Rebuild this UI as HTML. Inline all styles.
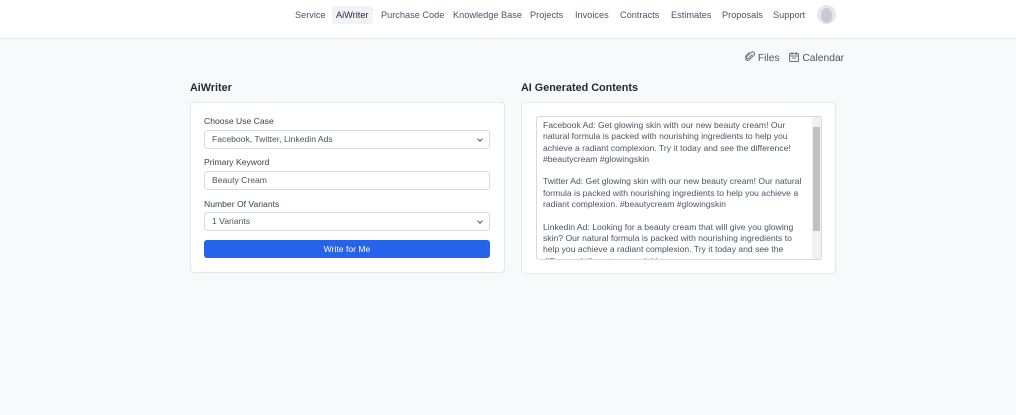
<!DOCTYPE html>
<html><head><meta charset="utf-8"><style>
*{box-sizing:border-box;margin:0;padding:0}
body{width:1016px;height:415px;background:#f8f9fb;font-family:"Liberation Sans",Arial,sans-serif;position:relative;overflow:hidden;color:#374151}
.hdr{position:absolute;left:0;top:0;width:1016px;height:39px;background:#fff;border-bottom:1px solid #e8eaee}
.nav{position:absolute;top:6px;font-size:9.2px;color:#4b5563;height:18px;line-height:18px}
.act{background:#f1f3f6;border-radius:3px;color:#1f2937;padding:0 4px}
.av{position:absolute;left:817px;top:5px;width:19px;height:19px;border-radius:50%;background:#e5e7eb;overflow:hidden}
.av:before{content:"";position:absolute;left:4px;top:3px;width:11px;height:15px;border-radius:50%;background:#c5cad3}
.h{position:absolute;font-size:10.8px;font-weight:bold;color:#1f2937}
.card{position:absolute;background:#fff;border:1px solid #e5e7eb;border-radius:4px}
.lbl{position:absolute;left:204px;font-size:8.6px;color:#374151}
.inp{position:absolute;left:204px;width:286px;height:19px;border:1px solid #d6d9de;border-radius:3px;font-size:8.6px;color:#4b5563;line-height:17px;padding-left:7px;background:#fff}
.chev{position:absolute;right:7px;top:6px;width:4px;height:4px;border-right:1px solid #555;border-bottom:1px solid #555;transform:rotate(45deg)}
.btn{position:absolute;left:204px;top:240px;width:286px;height:18px;background:#2563eb;border-radius:3px;color:#fff;font-size:8.6px;text-align:center;line-height:18px}
.ta{position:absolute;left:536px;top:116px;width:286px;height:144px;border:1px solid #d6d9de;border-radius:3px;overflow:hidden;background:#fff}
.txt{position:absolute;left:6px;top:3px;width:266px;font-size:8.6px;line-height:11.3px;color:#4b5563}
.sb{position:absolute;right:0;top:0;width:9px;height:142px;background:#f1f1f1}
.thumb{position:absolute;right:1px;top:10px;width:7px;height:104px;background:#c1c1c1}
</style></head><body>
<div class="hdr">
<span class="nav" style="left:295px">Service</span>
<span class="nav act" style="left:332px">AiWriter</span>
<span class="nav" style="left:381px">Purchase Code</span>
<span class="nav" style="left:453px">Knowledge Base</span>
<span class="nav" style="left:530px">Projects</span>
<span class="nav" style="left:575px">Invoices</span>
<span class="nav" style="left:620px">Contracts</span>
<span class="nav" style="left:671px">Estimates</span>
<span class="nav" style="left:722px">Proposals</span>
<span class="nav" style="left:773px">Support</span>
<div class="av"></div>
</div>
<div style="position:absolute;left:745px;top:51px;font-size:10.3px;color:#4b5563">
<svg width="10" height="11" viewBox="0 0 10 11" style="vertical-align:-1px"><path d="M7.5 3.5L3.5 7.5a1.2 1.2 0 0 1-1.7-1.7L6.3 1.3a2 2 0 0 1 2.8 2.8L4.5 8.7a2.6 2.6 0 0 1-3.7-3.7L4.5 1.3" fill="none" stroke="#6b7280" stroke-width="1"/></svg> Files
<span style="margin-left:7px"><svg width="10" height="10" viewBox="0 0 10 10" style="vertical-align:-1px"><rect x="0.5" y="1.5" width="9" height="8" rx="1" fill="none" stroke="#6b7280"/><path d="M0.5 4h9M3 0v3M7 0v3M3 6h4" stroke="#6b7280"/></svg> Calendar</span>
</div>
<div class="h" style="left:190px;top:82px">AiWriter</div>
<div class="h" style="left:521px;top:82px">AI Generated Contents</div>
<div class="card" style="left:190px;top:102px;width:315px;height:171px"></div>
<div class="card" style="left:521px;top:102px;width:315px;height:172px"></div>
<div class="lbl" style="top:116px">Choose Use Case</div>
<div class="inp" style="top:130px">Facebook, Twitter, Linkedin Ads<span class="chev"></span></div>
<div class="lbl" style="top:157px">Primary Keyword</div>
<div class="inp" style="top:171px">Beauty Cream</div>
<div class="lbl" style="top:199px">Number Of Variants</div>
<div class="inp" style="top:212px">1 Variants<span class="chev"></span></div>
<div class="btn">Write for Me</div>
<div class="ta"><div class="txt">Facebook Ad: Get glowing skin with our new beauty cream! Our natural formula is packed with nourishing ingredients to help you achieve a radiant complexion. Try it today and see the difference! #beautycream #glowingskin<br><br>Twitter Ad: Get glowing skin with our new beauty cream! Our natural formula is packed with nourishing ingredients to help you achieve a radiant complexion. #beautycream #glowingskin<br><br>Linkedin Ad: Looking for a beauty cream that will give you glowing skin? Our natural formula is packed with nourishing ingredients to help you achieve a radiant complexion. Try it today and see the difference! #beautycream #skincare</div><div class="sb"><div class="thumb"></div></div></div>
</body></html>
